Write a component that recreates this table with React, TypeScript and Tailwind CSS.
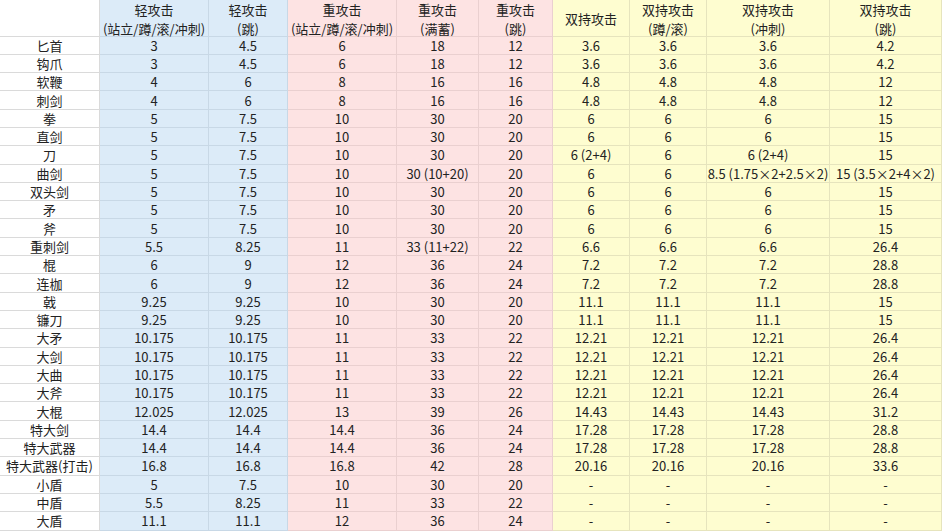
const headers: { top: string; sub?: string; group: 'blue' | 'pink' | 'yellow' }[] = [
  { top: '轻攻击', sub: '(站立/蹲/滚/冲刺)', group: 'blue' },
  { top: '轻攻击', sub: '(跳)', group: 'blue' },
  { top: '重攻击', sub: '(站立/蹲/滚/冲刺)', group: 'pink' },
  { top: '重攻击', sub: '(满蓄)', group: 'pink' },
  { top: '重攻击', sub: '(跳)', group: 'pink' },
  { top: '双持攻击', group: 'yellow' },
  { top: '双持攻击', sub: '(蹲/滚)', group: 'yellow' },
  { top: '双持攻击', sub: '(冲刺)', group: 'yellow' },
  { top: '双持攻击', sub: '(跳)', group: 'yellow' },
]

const rows: string[][] = [
  ['匕首', '3', '4.5', '6', '18', '12', '3.6', '3.6', '3.6', '4.2'],
  ['钩爪', '3', '4.5', '6', '18', '12', '3.6', '3.6', '3.6', '4.2'],
  ['软鞭', '4', '6', '8', '16', '16', '4.8', '4.8', '4.8', '12'],
  ['刺剑', '4', '6', '8', '16', '16', '4.8', '4.8', '4.8', '12'],
  ['拳', '5', '7.5', '10', '30', '20', '6', '6', '6', '15'],
  ['直剑', '5', '7.5', '10', '30', '20', '6', '6', '6', '15'],
  ['刀', '5', '7.5', '10', '30', '20', '6 (2+4)', '6', '6 (2+4)', '15'],
  ['曲剑', '5', '7.5', '10', '30 (10+20)', '20', '6', '6', '8.5 (1.75×2+2.5×2)', '15 (3.5×2+4×2)'],
  ['双头剑', '5', '7.5', '10', '30', '20', '6', '6', '6', '15'],
  ['矛', '5', '7.5', '10', '30', '20', '6', '6', '6', '15'],
  ['斧', '5', '7.5', '10', '30', '20', '6', '6', '6', '15'],
  ['重刺剑', '5.5', '8.25', '11', '33 (11+22)', '22', '6.6', '6.6', '6.6', '26.4'],
  ['棍', '6', '9', '12', '36', '24', '7.2', '7.2', '7.2', '28.8'],
  ['连枷', '6', '9', '12', '36', '24', '7.2', '7.2', '7.2', '28.8'],
  ['戟', '9.25', '9.25', '10', '30', '20', '11.1', '11.1', '11.1', '15'],
  ['镰刀', '9.25', '9.25', '10', '30', '20', '11.1', '11.1', '11.1', '15'],
  ['大矛', '10.175', '10.175', '11', '33', '22', '12.21', '12.21', '12.21', '26.4'],
  ['大剑', '10.175', '10.175', '11', '33', '22', '12.21', '12.21', '12.21', '26.4'],
  ['大曲', '10.175', '10.175', '11', '33', '22', '12.21', '12.21', '12.21', '26.4'],
  ['大斧', '10.175', '10.175', '11', '33', '22', '12.21', '12.21', '12.21', '26.4'],
  ['大棍', '12.025', '12.025', '13', '39', '26', '14.43', '14.43', '14.43', '31.2'],
  ['特大剑', '14.4', '14.4', '14.4', '36', '24', '17.28', '17.28', '17.28', '28.8'],
  ['特大武器', '14.4', '14.4', '14.4', '36', '24', '17.28', '17.28', '17.28', '28.8'],
  ['特大武器(打击)', '16.8', '16.8', '16.8', '42', '28', '20.16', '20.16', '20.16', '33.6'],
  ['小盾', '5', '7.5', '10', '30', '20', '-', '-', '-', '-'],
  ['中盾', '5.5', '8.25', '11', '33', '22', '-', '-', '-', '-'],
  ['大盾', '11.1', '11.1', '12', '36', '24', '-', '-', '-', '-'],
]

const groupCls = {
  white: 'bg-white border-[#dadada]',
  blue: 'bg-[#dcebf8] border-[#c8d8e6]',
  pink: 'bg-[#fde3e3] border-[#ead0d0]',
  yellow: 'bg-[#fefdd0] border-[#e6e4bd]',
}

function groupOf(col: number): keyof typeof groupCls {
  if (col === 0) return 'white'
  return headers[col - 1].group
}

export default function App() {
  return (
    <div
      className="grid h-[531px] w-[942px] grid-cols-[100px_109px_79px_109px_82px_74px_77px_77px_123px_112px] grid-rows-[36.5px_repeat(27,18.3px)] overflow-hidden bg-white text-[13px] text-[#222222]"
      style={{ fontFamily: '"Noto Sans CJK SC", "Microsoft YaHei", sans-serif' }}
    >
      <div className={`border-b border-r ${groupCls.white}`} />
      {headers.map((h, i) => (
        <div
          key={i}
          className={`flex flex-col items-center justify-center gap-[4px] border-b border-r pt-[2px] leading-[15px] ${groupCls[h.group]}`}
        >
          <span>{h.top}</span>
          {h.sub && <span>{h.sub}</span>}
        </div>
      ))}
      {rows.map((r, ri) =>
        r.map((v, ci) => (
          <div
            key={`${ri}-${ci}`}
            className={`flex items-center justify-center whitespace-nowrap border-b border-r leading-none ${groupCls[groupOf(ci)]}`}
          >
            {v}
          </div>
        ))
      )}
    </div>
  )
}
